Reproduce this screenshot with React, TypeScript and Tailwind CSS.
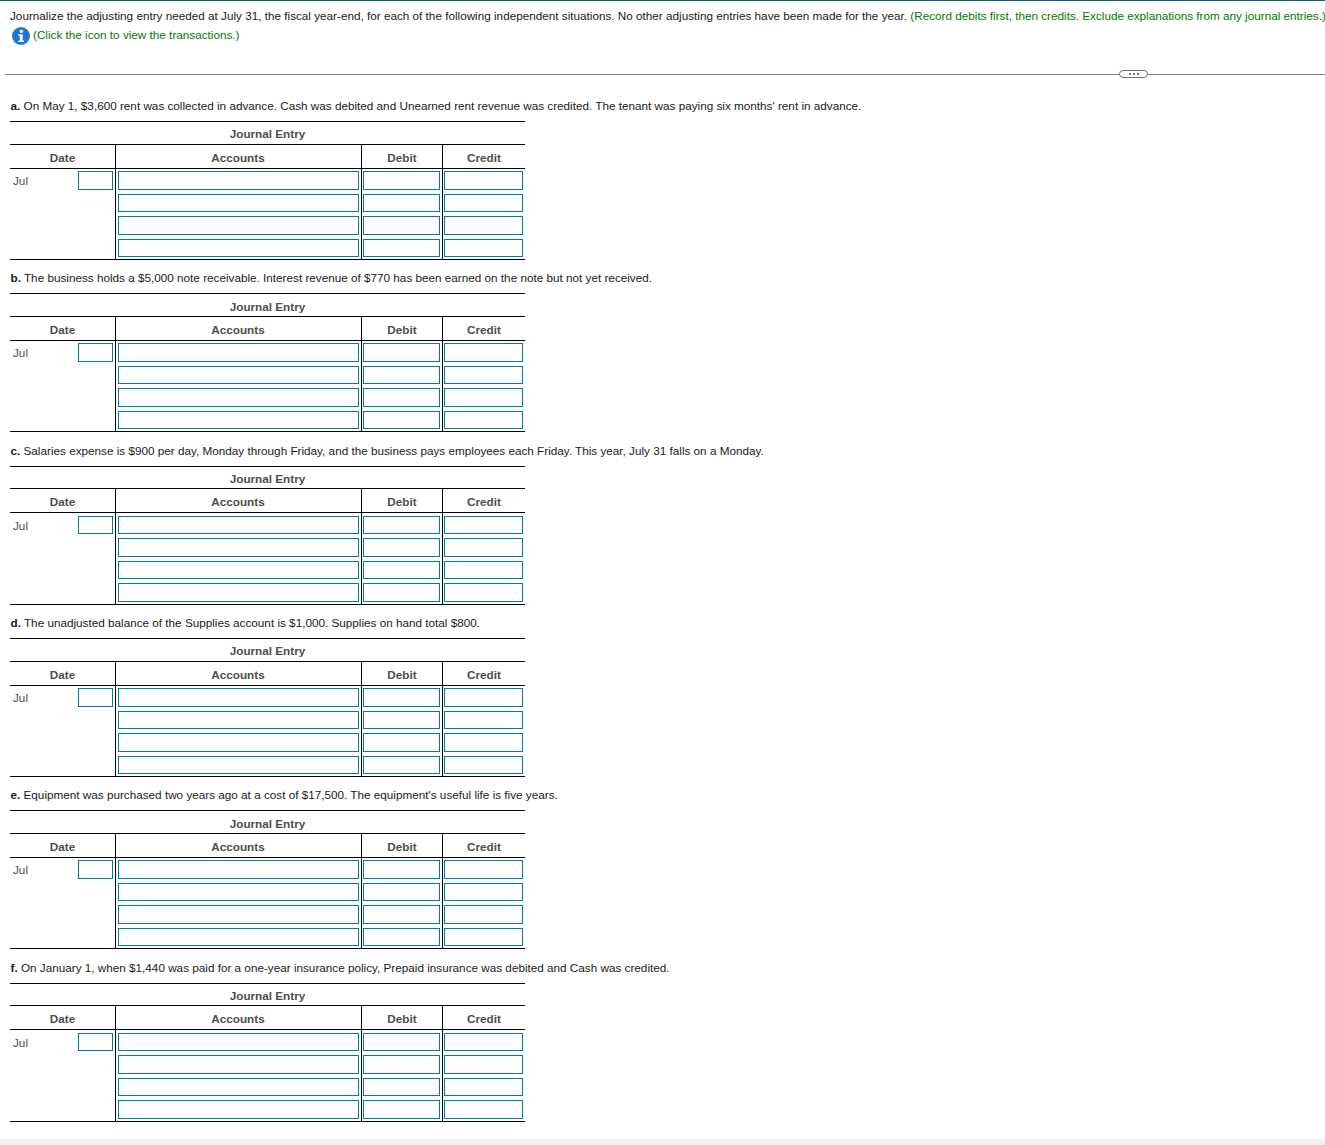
const entries = [
  { letter: 'a.', text: " On May 1, $3,600 rent was collected in advance. Cash was debited and Unearned rent revenue was credited. The tenant was paying six months' rent in advance." },
  { letter: 'b.', text: ' The business holds a $5,000 note receivable. Interest revenue of $770 has been earned on the note but not yet received.' },
  { letter: 'c.', text: ' Salaries expense is $900 per day, Monday through Friday, and the business pays employees each Friday. This year, July 31 falls on a Monday.' },
  { letter: 'd.', text: ' The unadjusted balance of the Supplies account is $1,000. Supplies on hand total $800.' },
  { letter: 'e.', text: " Equipment was purchased two years ago at a cost of $17,500. The equipment's useful life is five years." },
  { letter: 'f.', text: ' On January 1, when $1,440 was paid for a one-year insurance policy, Prepaid insurance was debited and Cash was credited.' },
];

function Field({ width }: { width: string }) {
  return <div className={`h-[18.5px] border border-[#007c9c] bg-white ${width}`} />;
}

function JournalTable() {
  return (
    <div className="w-[515px] ml-[10px] border-t border-b border-black leading-[14px]">
      <div className="h-[22.5px] pt-[3px] flex items-center justify-center font-bold text-[#4d4d4d] border-b border-black">
        Journal Entry
      </div>
      <div className="flex h-[24px] pt-0 border-b border-black font-bold text-[#4d4d4d] text-center">
        <div className="w-[105px] pt-[3px] flex items-center justify-center">Date</div>
        <div className="w-[246px] pt-[3px] pr-[1px] border-l border-black flex items-center justify-center">Accounts</div>
        <div className="w-[81px] pt-[3px] border-l border-black flex items-center justify-center">Debit</div>
        <div className="flex-1 pt-[3px] border-l border-black flex items-center justify-center">Credit</div>
      </div>
      <div className="flex h-[90.4px]">
        <div className="w-[105px] pt-[2.5px] pr-[2px] flex justify-between items-start">
          <span className="pl-[3px] pt-[3px] text-[#4d4d4d]">Jul</span>
          <Field width="w-[35px]" />
        </div>
        <div className="w-[246px] border-l border-black pt-[2.5px] pl-[2px] flex flex-col gap-[4px]">
          {[0, 1, 2, 3].map((i) => <Field key={i} width="w-[241px]" />)}
        </div>
        <div className="w-[81px] border-l border-black pt-[2.5px] pl-[1px] flex flex-col gap-[4px]">
          {[0, 1, 2, 3].map((i) => <Field key={i} width="w-[77px]" />)}
        </div>
        <div className="flex-1 border-l border-black pt-[2.5px] pl-[1px] flex flex-col gap-[4px]">
          {[0, 1, 2, 3].map((i) => <Field key={i} width="w-[79px]" />)}
        </div>
      </div>
    </div>
  );
}

export default function App() {
  return (
    <div className="w-[1325px] h-[1145px] overflow-hidden bg-white font-['Liberation_Sans',Arial,sans-serif] text-[11.72px] leading-[14px] text-[#1a1a1a] flex flex-col">
      <div className="h-[1px] bg-[#00695c] shrink-0" />

      {/* Instructions */}
      <div className="pl-[10px] pt-[8px] h-[73px] shrink-0 whitespace-nowrap">
        <p>
          Journalize the adjusting entry needed at July 31, the fiscal year-end, for each of the following independent situations. No other adjusting entries have been made for the year.{' '}
          <span className="text-[#007a00]">(Record debits first, then credits. Exclude explanations from any journal entries.)</span>
        </p>
        <div className="flex items-center gap-[3px] pl-[2px] mt-[4px]">
          <svg width="18" height="18" viewBox="0 0 18 18" className="shrink-0">
            <circle cx="9" cy="9" r="9" fill="#1e78d2" />
            <circle cx="9.4" cy="4.3" r="1.7" fill="#fff" />
            <path d="M6.4 7.2h4.3v6.3h1.3v1.6H6.3v-1.6h1.5V8.8H6.4z" fill="#fff" />
          </svg>
          <span className="text-[#007a00] -translate-y-[1px]">(Click the icon to view the transactions.)</span>
        </div>
      </div>

      {/* Divider */}
      <div className="relative h-[1px] ml-[5px] bg-[#7f8694] shrink-0">
        <div className="absolute left-[1114px] top-[-4px] w-[29px] h-[8px] rounded-full border border-[#6b7280] bg-white flex items-center justify-center gap-[2px]">
          <span className="w-[2px] h-[2px] bg-[#6b7280]" />
          <span className="w-[2px] h-[2px] bg-[#6b7280]" />
          <span className="w-[2px] h-[2px] bg-[#6b7280]" />
        </div>
      </div>

      {/* Journal entries */}
      <div className="pt-[24px]">
        {entries.map((entry) => (
          <div key={entry.letter} className="h-[172.35px]">
            <p className="pl-[10.5px] h-[22px] leading-[13px] whitespace-nowrap">
              <b>{entry.letter}</b>{entry.text}
            </p>
            <JournalTable />
          </div>
        ))}
      </div>

      <div className="mt-auto h-[6px] bg-[#f2f2f2] shrink-0" />
    </div>
  );
}
